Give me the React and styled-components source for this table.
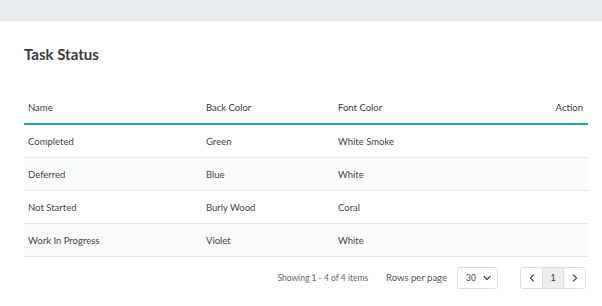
import React from "react";
import styled, { createGlobalStyle } from "styled-components";

const Global = createGlobalStyle`
  html, body { margin: 0; padding: 0; background: #fff; }
  body { font-family: Lato, "Noto Sans", sans-serif; color: #333; }
`;

const TopBar = styled.div`
  height: 20px;
  background: #ebeef1;
  border-bottom: 1px solid #e4e7ea;
`;

const Card = styled.div`
  padding: 0 14px 0 24px;
`;

const Title = styled.h1`
  margin: 23px 0 0;
  font-size: 15px;
  line-height: 20px;
  font-weight: 700;
  color: #3a3a3a;
`;

const Table = styled.div`
  margin-top: 27px;
  display: flex;
  flex-direction: column;
`;

const Row = styled.div`
  display: grid;
  grid-template-columns: 178px 132px 1fr 80px;
  align-items: center;
  height: 32px;
  padding: 0 5px 0 4px;
  background: ${(p) => (p.$alt ? "#fafbfb" : "#fff")};
  border-bottom: ${(p) => (p.$head ? "2px solid #1a9fd9" : "1px solid #e6e8ea")};
`;

const Cell = styled.div`
  font-size: 9.5px;
  color: ${(p) => (p.$head ? "#3c3c3c" : "#444")};
  text-align: ${(p) => (p.$right ? "right" : "left")};
  white-space: nowrap;
`;

const Footer = styled.div`
  margin-top: 9px;
  display: flex;
  align-items: center;
  justify-content: flex-end;
  padding-right: 2px;
  height: 23px;
`;

const Info = styled.span`
  font-size: 8.5px;
  color: #666;
  margin-right: 18px;
`;

const Label = styled.span`
  font-size: 9.5px;
  color: #555;
  margin-right: 10px;
`;

const Select = styled.div`
  width: 41px;
  height: 22px;
  box-sizing: border-box;
  border: 1px solid #dcdfe2;
  border-radius: 3px;
  display: flex;
  align-items: center;
  padding: 0 6px 0 8px;
  justify-content: space-between;
  font-size: 8.5px;
  color: #444;
  margin-right: 22px;
`;

const Pager = styled.div`
  display: flex;
  height: 22px;
  box-sizing: border-box;
  border: 1px solid #dcdfe2;
  border-radius: 3px;
  overflow: hidden;
`;

const PageBtn = styled.div`
  width: ${(p) => (p.$active ? "22px" : "21px")};
  box-sizing: border-box;
  display: flex;
  align-items: center;
  justify-content: center;
  font-size: 9px;
  color: #333;
  background: ${(p) => (p.$active ? "#eeeff0" : "#fff")};
  border-left: ${(p) => (p.$active ? "1px solid #dcdfe2" : "none")};
  border-right: ${(p) => (p.$active ? "1px solid #dcdfe2" : "none")};
`;

const Chevron = ({ dir }) => {
  const d =
    dir === "down" ? "M1 1.5 L4 4.5 L7 1.5" : dir === "left" ? "M4.5 1 L1.5 4 L4.5 7" : "M1.5 1 L4.5 4 L1.5 7";
  const w = dir === "down" ? 8 : 6;
  const h = dir === "down" ? 6 : 8;
  return (
    <svg width={w} height={h} viewBox={`0 0 ${w} ${h}`} fill="none">
      <path d={d} stroke="#444" strokeWidth="1.1" strokeLinecap="round" strokeLinejoin="round" />
    </svg>
  );
};

const rows = [
  ["Completed", "Green", "White Smoke"],
  ["Deferred", "Blue", "White"],
  ["Not Started", "Burly Wood", "Coral"],
  ["Work In Progress", "Violet", "White"],
];

export default function App() {
  return (
    <>
      <Global />
      <TopBar />
      <Card>
        <Title>Task Status</Title>
        <Table>
          <Row $head>
            <Cell $head>Name</Cell>
            <Cell $head>Back Color</Cell>
            <Cell $head>Font Color</Cell>
            <Cell $head $right>Action</Cell>
          </Row>
          {rows.map((r, i) => (
            <Row key={r[0]} $alt={i % 2 === 1}>
              <Cell>{r[0]}</Cell>
              <Cell>{r[1]}</Cell>
              <Cell>{r[2]}</Cell>
              <Cell $right />
            </Row>
          ))}
        </Table>
        <Footer>
          <Info>Showing 1 - 4 of 4 items</Info>
          <Label>Rows per page</Label>
          <Select>
            <span>30</span>
            <Chevron dir="down" />
          </Select>
          <Pager>
            <PageBtn><Chevron dir="left" /></PageBtn>
            <PageBtn $active>1</PageBtn>
            <PageBtn><Chevron dir="right" /></PageBtn>
          </Pager>
        </Footer>
      </Card>
    </>
  );
}
